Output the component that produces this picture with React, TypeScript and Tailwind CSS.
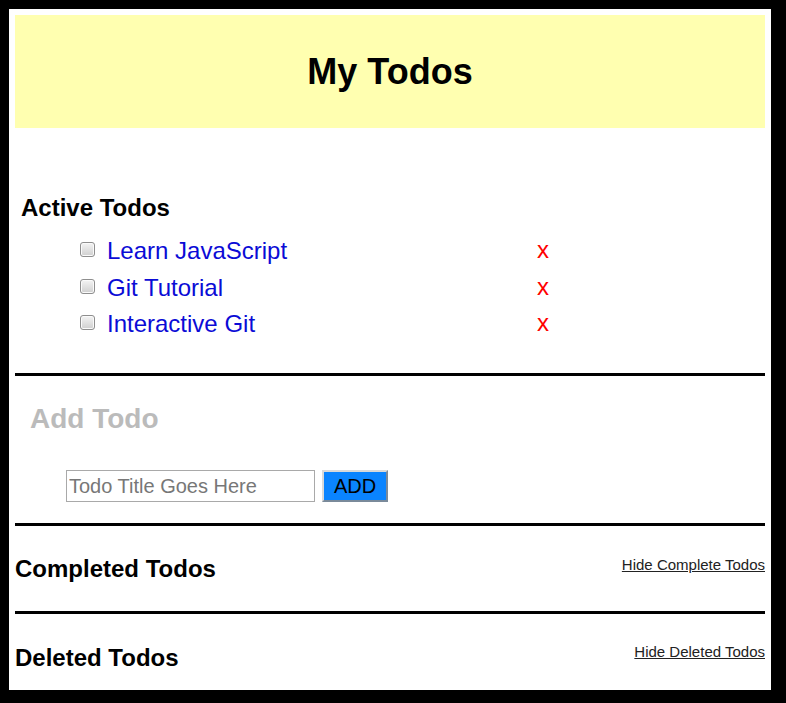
const todos = ['Learn JavaScript', 'Git Tutorial', 'Interactive Git']

function Checkbox() {
  return (
    <span className="inline-block w-[15px] h-[15px] rounded-[3px] border border-[#8e8e8e] bg-gradient-to-b from-[#f4f4f4] to-[#cfcfcf] shadow-[inset_0_0_0_1px_#fafafa]" />
  )
}

function Divider() {
  return <div className="h-[3px] bg-black" />
}

export default function App() {
  return (
    <div
      className="w-[786px] h-[703px] bg-black pt-[9px] pl-[9px]"
      style={{ fontFamily: '"Liberation Sans", Arial, sans-serif' }}
    >
      <div className="w-[762px] h-[681px] bg-white p-[6px]">
        <header className="h-[113px] bg-[#ffffb0] flex items-center justify-center">
          <h1 className="text-[36px] leading-[40px] font-bold text-black">My Todos</h1>
        </header>

        {/* active */}
        <section className="mt-[66px]">
          <h3 className="pl-[6px] text-[24px] leading-[28px] font-bold text-black">Active Todos</h3>
          <ul className="mt-[11px] pl-[65px]">
            {todos.map((t) => (
              <li key={t} className="h-[36.5px] flex items-center">
                <span className="w-[27px] flex items-center -mt-[3px]">
                  <Checkbox />
                </span>
                <span className="w-[430px] text-[24px] leading-[28px] text-[#0b0bd6]">{t}</span>
                <span className="text-[24px] leading-[28px] text-[#ff0000] -mt-[2px]">x</span>
              </li>
            ))}
          </ul>
        </section>

        <div className="mt-[30.5px]">
          <Divider />
        </div>

        {/* add */}
        <section className="mt-[27px]">
          <h2 className="pl-[15px] text-[28px] leading-[32px] font-bold text-[#bbbbbb]">Add Todo</h2>
          <div className="mt-[35px] pl-[51px] flex gap-[7px]">
            <input
              placeholder="Todo Title Goes Here"
              className="w-[249px] h-[32px] border border-[#a9a9a9] px-[2px] text-[20px] text-black placeholder:text-[#777777] outline-none"
            />
            <button className="w-[66px] h-[32px] bg-[#0a84ff] border-2 border-t-[#d9d9d9] border-l-[#d9d9d9] border-r-[#7a8a9a] border-b-[#7a8a9a] text-[20px] leading-[26px] text-black">
              ADD
            </button>
          </div>
        </section>

        <div className="mt-[21px]">
          <Divider />
        </div>

        {/* completed */}
        <section className="mt-[29px] flex justify-between items-start">
          <h3 className="text-[24px] leading-[28px] font-bold text-black">Completed Todos</h3>
          <a href="#" className="mt-[1px] text-[15px] leading-[18px] text-[#222] underline">
            Hide Complete Todos
          </a>
        </section>

        <div className="mt-[28px]">
          <Divider />
        </div>

        {/* deleted */}
        <section className="mt-[30px] flex justify-between items-start">
          <h3 className="text-[24px] leading-[28px] font-bold text-black">Deleted Todos</h3>
          <a href="#" className="-mt-[1px] text-[15px] leading-[18px] text-[#222] underline">
            Hide Deleted Todos
          </a>
        </section>
      </div>
    </div>
  )
}
